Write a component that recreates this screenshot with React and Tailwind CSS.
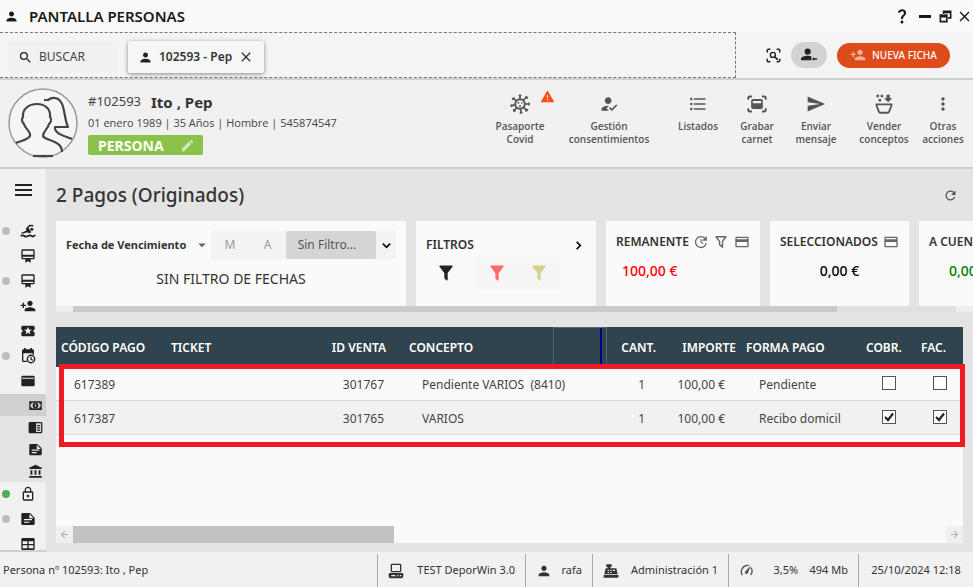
import {
  MdPerson,
  MdSearch,
  MdClose,
  MdPersonAdd,
  MdWarning,
  MdHowToReg,
  MdFormatListBulleted,
  MdSend,
  MdMoreVert,
  MdEdit,
  MdCardMembership,
  MdLocalActivity,
  MdAccountBalance,
  MdLockOutline,
  MdRefresh,
  MdCreditCard,
  MdArrowDropDown,
  MdQuestionMark,
  MdArrowBack,
  MdArrowForward,
} from "react-icons/md";

function Svg({ size = 16, className = "", children }) {
  return (
    <svg
      width={size}
      height={size}
      viewBox="0 0 24 24"
      fill="currentColor"
      className={className}
      aria-hidden="true"
    >
      {children}
    </svg>
  );
}

const Stroke = ({ width = 2, ...props }) => (
  <path fill="none" stroke="currentColor" strokeWidth={width} {...props} />
);

const ScanSearchIcon = ({ size }) => (
  <Svg size={size}>
    <Stroke width="2.4" d="M2 7V4q0-2 2-2h3M17 2h3q2 0 2 2v3M22 17v3q0 2-2 2h-3M7 22H4q-2 0-2-2v-3" />
    <circle cx="11" cy="11" r="4" fill="none" stroke="currentColor" strokeWidth="2.2" />
    <Stroke width="2.8" d="M14 14l5 5" />
  </Svg>
);

const PersonBackIcon = ({ size }) => (
  <Svg size={size}>
    <circle cx="10" cy="7" r="4.6" />
    <path d="M0 20v-2.500C0 14.500 6 13 10 13c2 0 4 .3 5.500 1v6z" />
    <path d="M16.500 18l3-2.500v1.500H24v2h-4.500v1.500z" />
  </Svg>
);

const RestoreIcon = ({ size }) => (
  <Svg size={size}>
    <path d="M7 1h16v15h-6v-3h3V6H10v3H7zM1 8h15v15H1zm3 6v6h9v-6z" fillRule="evenodd" />
  </Svg>
);

const VirusIcon = ({ size }) => (
  <Svg size={size}>
    <circle cx="12" cy="12" r="5.800" fill="none" stroke="currentColor" strokeWidth="2.400" />
    <Stroke
      width="2"
      d="M12 6V2M16 7.500l3.500-3.500M18 12h4M16.500 16l3 3.500M12.500 18l.8 4M8 16.500L5 20M6 13l-4 1M7.500 8L4 5.500"
    />
    <Stroke
      width="2.600"
      strokeLinecap="round"
      d="M11.500 1.800h1M19.500 3.500l1 1M22.500 11.500v1M20.500 19l-1 1M12.800 22.500h1M5.500 20.500l-1-1M1.800 14.500v-1M3.500 6l1-1"
    />
    <circle cx="10" cy="10.500" r="1.200" />
    <circle cx="14.300" cy="10.800" r="1" />
    <circle cx="12" cy="14.500" r="1.200" />
  </Svg>
);

const CardScanIcon = ({ size }) => (
  <Svg size={size}>
    <Stroke width="2.200" d="M1.500 7V5q0-2 2-2H6M18 3h2.500q2 0 2 2v2M22.500 17v2q0 2-2 2H18M6 21H3.500q-2 0-2-2v-2" />
    <path d="M7 6h10q2 0 2 2v8q0 2-2 2H7q-2 0-2-2V8q0-2 2-2zm0 2.500V11h10V8.500z" fillRule="evenodd" />
  </Svg>
);

const BasketIcon = ({ size }) => (
  <Svg size={size}>
    <path d="M3 1h3v3H3zM8 1h3v3H8zM5.500 6h3v3h-3zM15 1h4v4h3l-5 5-5-5h3z" />
    <Stroke width="2.200" d="M3 12.500h18v1.500l-3 7.500q-.4 1-1.500 1h-9q-1.100 0-1.500-1L3 14z" />
  </Svg>
);

const SwimIcon = ({ size, className }) => (
  <Svg size={size} className={className}>
    <path d="M8.500 8.500L14 2.500l6 .5v2.300l-5-.3-2.200 2.500 4.200 6.500q-2 2-4 .8t-5 0q-3 1.200-6 1.400v-1.500q4-1 8-3.700z" />
    <circle cx="17.800" cy="9.500" r="2.300" />
    <Stroke width="2.600" d="M1 19.500q3-2 5.500 0t5.500 0 5.500 0 5.500-1.500" />
  </Svg>
);

const CalendarClockIcon = ({ size, className }) => (
  <Svg size={size} className={className}>
    <path d="M6 0h2.500v2h7V0H18v2h1q2 0 2 2v6h-2V8H5v11h5l1 2H5q-2 0-2-2V4q0-2 2-2h1z" />
    <circle cx="16.500" cy="16.500" r="5.500" fill="none" stroke="currentColor" strokeWidth="2.200" />
    <Stroke width="1.800" d="M16.500 13v4l3 1.500" />
  </Svg>
);

const CardIcon = ({ size, className }) => (
  <Svg size={size} className={className}>
    <path d="M4 4h16q2 0 2 2v12q0 2-2 2H4q-2 0-2-2V6q0-2 2-2zm-1 3v1.500h18V7z" fillRule="evenodd" />
  </Svg>
);

const CashIcon = ({ size }) => (
  <Svg size={size}>
    <path d="M2 5h20v14H2zm4 2.500q0 2-2 2v5q2 0 2 2h12q0-2 2-2v-5q-2 0-2-2z" fillRule="evenodd" />
    <circle cx="12" cy="12" r="4.500" />
    <path d="M11 10h2v4h-2z" fill="#d0d0d0" />
  </Svg>
);

const ReaderIcon = ({ size }) => (
  <Svg size={size}>
    <path d="M3 3h18q2 0 2 2v14q0 2-2 2H3q-2 0-2-2V5q0-2 2-2zm10 2v14h8V5z" fillRule="evenodd" />
    <path d="M14.500 8h5v2h-5zM14.500 11.500h5v2h-5zM14.500 15h5v2h-5z" />
  </Svg>
);

const NoteIcon = ({ size, className }) => (
  <Svg size={size} className={className}>
    <path
      d="M4 3h11l7 7v9q0 2-2 2H4q-2 0-2-2V5q0-2 2-2zm10 1.500V11h6.500zM6 12v1.800h12V12zm0 4v1.800h8V16z"
      fillRule="evenodd"
    />
  </Svg>
);

const GridIcon = ({ size, className }) => (
  <Svg size={size} className={className}>
    <path
      d="M4 3h16q2 0 2 2v14q0 2-2 2H4q-2 0-2-2V5q0-2 2-2zm0 5v4h7V8zm9 0v4h7V8zm-9 6v4.500h7V14zm9 0v4.500h7V14z"
      fillRule="evenodd"
    />
  </Svg>
);

const FilterIcon = ({ size, className }) => (
  <Svg size={size} className={className}>
    <path d="M14,12V19.880C14.040,20.180 13.940,20.500 13.710,20.710C13.320,21.100 12.690,21.100 12.300,20.710L10.290,18.700C10.060,18.470 9.960,18.160 10,17.870V12H9.970L4.210,4.620C3.870,4.190 3.950,3.560 4.380,3.220C4.570,3.080 4.780,3 5,3V3H19V3C19.220,3 19.430,3.080 19.620,3.220C20.050,3.560 20.130,4.190 19.790,4.620L14.030,12H14Z" />
  </Svg>
);

const FilterOutlineIcon = ({ size }) => (
  <Svg size={size}>
    <Stroke width="2.400" d="M3.500 3h17L14.500 11v10l-5-4.500V11z" strokeLinejoin="round" />
  </Svg>
);

const UpdateIcon = ({ size }) => (
  <Svg size={size}>
    <Stroke width="2.200" d="M21 14a9.300 9.300 0 1 1-2.500-8.500" />
    <path d="M22 1.500V10h-8.500z" />
    <Stroke width="1.800" d="M12 7v5.500l4 2.300" />
  </Svg>
);

const GaugeIcon = ({ size, className }) => (
  <Svg size={size} className={className}>
    <Stroke width="2.200" d="M5.500 19.500a10 10 0 0 1 10-15.500M19 7.500a10 10 0 0 1-.5 12" />
    <path d="M19 4l-4.500 11.500a2.600 2.600 0 1 1-4.300-2.500z" />
  </Svg>
);

const ComputerIcon = ({ size }) => (
  <Svg size={size}>
    <path d="M6 1h12q2 0 2 2v9q0 2-2 2H6q-2 0-2-2V3q0-2 2-2zm0 2v9h12V3z" fillRule="evenodd" />
    <path d="M3 15h18q2 0 2 2v3q0 3-3 3H4q-3 0-3-3v-3q0-2 2-2zm2 3v2h6v-2zm9 0v2h2v-2zm4 0v2h2v-2z" fillRule="evenodd" />
  </Svg>
);

const RegisterIcon = ({ size }) => (
  <Svg size={size}>
    <path
      d="M5 2h8v4h-2v2h9l2 9H2L4 8h3V6H5zm2 8v2h2v-2zm4 0v2h2v-2zm4 0v2h3v-2zm-8 3.500v1.500h2v-1.500zm4 0v1.500h2v-1.500zM1 18h22v4H1z"
      fillRule="evenodd"
    />
  </Svg>
);

const Chevron = ({ size, d }) => (
  <Svg size={size}>
    <Stroke width="3.500" d={d} />
  </Svg>
);

function Avatar() {
  return (
    <svg width="70" height="70" viewBox="0 0 70 70" fill="none" className="shrink-0" aria-hidden="true">
      <circle cx="35" cy="35" r="34" fill="#f5f5f5" stroke="#999" strokeWidth="1.500" />
      <g stroke="#444" strokeWidth="2.200" strokeLinejoin="round">
        <path d="M8 55c4-2 12-3 14-7 1-5-5-7-6-12-2-2-3-5-1-7-1-8 6-13 14-13s14 5 13 13c2 2 1 5-1 7-1 5-6 7-6 12 2 5 19 4 19 16" />
        <path d="M36 12h4c4-3 10-3 13 2 4 6 3 16 7 25H47c-1 7 10 9 17 12" />
        <path d="M25 68h20" />
      </g>
    </svg>
  );
}

const actions = [
  { lines: ["Pasaporte", "Covid"], icon: VirusIcon, width: "w-[78px]", alert: true },
  { lines: ["Gestión", "consentimientos"], icon: MdHowToReg, width: "w-[100px]" },
  { lines: ["Listados"], icon: MdFormatListBulleted, width: "w-[78px]" },
  { lines: ["Grabar", "carnet"], icon: CardScanIcon, width: "w-10" },
  { lines: ["Enviar", "mensaje"], icon: MdSend, width: "w-[78px]" },
  { lines: ["Vender", "conceptos"], icon: BasketIcon, width: "w-[58px]" },
  { lines: ["Otras", "acciones"], icon: MdMoreVert, width: "w-[60px]" },
];

const menuTop = [
  { label: "Actividades", icon: SwimIcon, dot: "bg-[#bdbdbd]" },
  { label: "Abonos", icon: MdCardMembership },
  { label: "Cuotas", icon: MdCardMembership, dot: "bg-[#bdbdbd]" },
  { label: "Relaciones", icon: MdPersonAdd },
  { label: "Entradas", icon: MdLocalActivity },
  { label: "Reservas", icon: CalendarClockIcon, dot: "bg-[#bdbdbd]" },
  { label: "Economía", icon: CardIcon },
];

const menuSub = [
  { label: "Pagos", icon: CashIcon, active: true },
  { label: "Recibos", icon: ReaderIcon },
  { label: "Facturas", icon: NoteIcon },
  { label: "Bancos", icon: MdAccountBalance },
];

const menuBottom = [
  { label: "Accesos", icon: MdLockOutline, dot: "bg-[#4caf50]" },
  { label: "Documentos", icon: NoteIcon, dot: "bg-[#bdbdbd]" },
  { label: "Tablas", icon: GridIcon },
];

const payments = [
  { id: "617389", sale: "301767", concept: "Pendiente VARIOS  (8410)", qty: 1, amount: "100,00 €", method: "Pendiente", paid: false, invoiced: false },
  { id: "617387", sale: "301765", concept: "VARIOS", qty: 1, amount: "100,00 €", method: "Recibo domicil", paid: true, invoiced: true },
];

function TitleBar() {
  return (
    <header className="flex h-8 shrink-0 items-center bg-[#fafafa] pl-1 text-[#1a1a1a]">
      <MdPerson size={15} />
      <h1 className="ml-2.5 flex-1 text-[15px] font-semibold">PANTALLA PERSONAS</h1>
      <div className="flex items-center gap-1">
        <button aria-label="Ayuda"><MdQuestionMark size={18} /></button>
        <button aria-label="Minimizar" className="flex w-5 justify-center">
          <span className="h-[3px] w-3 bg-[#1a1a1a]" />
        </button>
        <button aria-label="Restaurar"><RestoreIcon size={13} /></button>
        <button aria-label="Cerrar"><MdClose size={17} /></button>
      </div>
    </header>
  );
}

function TabBar() {
  return (
    <div className="flex h-12 shrink-0 items-stretch border-b-2 border-[#cfcfcf] bg-[#f4f4f4]">
      <nav className="flex flex-1 items-center gap-2.5 border border-l-0 border-dashed border-[#777] pt-1 pl-2">
        <button className="flex h-8 w-[110px] items-center gap-1.5 bg-[#f1f1f1] pl-2.5 text-[12px] text-[#444]">
          <MdSearch size={15} className="text-[#222]" />
          BUSCAR
        </button>
        <div className="flex h-8 items-center rounded-xs bg-[#f6f6f6] pr-2.5 pl-2.5 text-[12px] font-semibold text-[#333] shadow-[0_1px_4px_rgba(0,0,0,0.45)]">
          <MdPerson size={15} className="mr-1.5 text-[#222]" />
          102593 - Pep
          <button aria-label="Cerrar ficha" className="ml-1.5"><MdClose size={16} /></button>
        </div>
      </nav>
      <div className="flex items-center gap-2.5 pr-[23px] pl-[30px] text-[#222]">
        <button aria-label="Buscar por imagen"><ScanSearchIcon size={15} /></button>
        <button aria-label="Persona anterior" className="flex h-[26px] w-9 items-center justify-center rounded-full bg-[#d3d3d3]">
          <PersonBackIcon size={16} />
        </button>
        <button className="flex h-[25px] w-[113px] items-center justify-center gap-1.5 rounded-full bg-[#de4c1c] text-[10px] font-medium text-white">
          <MdPersonAdd size={16} className="text-[#f3b09b]" />
          NUEVA FICHA
        </button>
      </div>
    </div>
  );
}

function PersonHeader() {
  return (
    <section className="flex h-[89px] shrink-0 border-b-2 border-[#cfcfcf] bg-[#f1f1f1] pl-2 text-[#444]">
      <div className="flex pt-2">
        <Avatar />
        <div className="ml-2.5">
          <div className="flex h-6 items-center pt-1">
            <span className="text-[13px]">#102593</span>
            <h2 className="ml-2.5 text-[15px] font-bold text-[#333]">Ito , Pep</h2>
          </div>
          <p className="h-[23px] font-['Open_Sans',sans-serif] text-[11px] leading-[22px] whitespace-nowrap">
            01 enero 1989 | 35 Años | Hombre | 545874547
          </p>
          <button className="flex h-5 w-[115px] items-center justify-between rounded-xs bg-[#8bc34a] px-2 pl-2.5 text-[14px] font-bold text-white">
            PERSONA
            <MdEdit size={15} className="text-[#d0e7b7]" />
          </button>
        </div>
      </div>
      <div className="ml-auto flex items-start pt-3.5 font-['Open_Sans',sans-serif]">
        {actions.map(({ lines, icon: Icon, width, alert }) => (
          <button
            key={lines[0]}
            className={`relative flex flex-col items-center text-[10px] leading-[13px] font-semibold text-[#555] ${width}`}
          >
            <Icon size={20} />
            {alert && <MdWarning size={15} className="absolute top-[-5px] right-1 text-[#ff4d12]" />}
            <span className="mt-1.5">{lines[0]}</span>
            <span>{lines[1]}</span>
          </button>
        ))}
      </div>
    </section>
  );
}

function MenuItem({ label, icon: Icon, dot }) {
  return (
    <button aria-label={label} className="flex h-[25px] w-full shrink-0 items-center pb-0.5">
      <span className={`ml-0.5 size-2 rounded-full ${dot || ""}`} />
      <Icon size={16} className="ml-2.5" />
    </button>
  );
}

function Sidebar() {
  return (
    <aside className="flex w-[46px] shrink-0 flex-col overflow-hidden border-b-2 border-[#cfcfcf] bg-[#f1f1f1] text-[#222]">
      <button aria-label="Menú" className="flex h-[50px] w-full shrink-0 flex-col items-center justify-center gap-[3px] pb-2">
        <span className="h-0.5 w-[17px] bg-[#222]" />
        <span className="h-0.5 w-[17px] bg-[#222]" />
        <span className="h-0.5 w-[17px] bg-[#222]" />
      </button>
      {menuTop.map((item) => (
        <MenuItem key={item.label} {...item} />
      ))}
      <div className="shrink-0 bg-[#e4e4e4]">
        {menuSub.map(({ label, icon: Icon, active }) => (
          <button
            key={label}
            aria-label={label}
            className={`flex h-[22px] w-full items-center justify-end pr-[3px] ${active ? "bg-[#d0d0d0]" : ""}`}
          >
            <Icon size={15} />
          </button>
        ))}
      </div>
      {menuBottom.map((item) => (
        <MenuItem key={item.label} {...item} />
      ))}
    </aside>
  );
}

function SummaryCards() {
  return (
    <div className="overflow-hidden">
      <div className="flex h-[85px] gap-2.5 text-[#333] *:shrink-0 *:bg-[#fafafa]">
        <div className="w-[350px] px-2.5 pt-2.5">
          <div className="flex h-7 items-center">
            <label className="flex flex-1 items-center">
              <select aria-label="Tipo de fecha" className="w-[127px] appearance-none text-[11px] font-bold">
                <option>Fecha de Vencimiento</option>
              </select>
              <MdArrowDropDown size={18} className="text-[#666]" />
            </label>
            <div className="flex h-7 bg-[#f3f3f3] text-[12px] text-[#999]">
              <button className="w-[38px]">M</button>
              <button className="w-[37px]">A</button>
              <button className="w-[90px] rounded-xs bg-[#d5d5d5] pr-2 text-[#555]">Sin Filtro...</button>
              <button aria-label="Más filtros" className="flex w-5 items-center justify-center text-black">
                <Chevron size={11} d="M4 8l8 8 8-8" />
              </button>
            </div>
          </div>
          <p className="mt-2.5 text-center text-[14px] leading-5">SIN FILTRO DE FECHAS</p>
        </div>

        <div className="w-[180px] px-2.5 pt-3">
          <div className="flex h-6 items-center justify-between text-[12px] font-semibold">
            FILTROS
            <button aria-label="Ver filtros" className="pr-0.5 text-black">
              <Chevron size={11} d="M8 4l8 8-8 8" />
            </button>
          </div>
          <div className="flex h-8 items-center">
            <button aria-label="Filtrar" className="flex w-10 justify-center"><FilterIcon size={20} className="text-[#222]" /></button>
            <div className="ml-2.5 flex h-8 w-[84px] items-center justify-around bg-[#f5f5f5]">
              <button aria-label="Filtro rojo"><FilterIcon size={20} className="text-[#ff6b6b]" /></button>
              <button aria-label="Filtro amarillo"><FilterIcon size={20} className="text-[#d6d48c]" /></button>
            </div>
          </div>
        </div>

        <div className="w-[154px] px-2.5 pt-3">
          <div className="flex h-[18px] items-center justify-between text-[12px] font-semibold">
            REMANENTE
            <span className="flex items-center gap-1.5 text-[#666]">
              <UpdateIcon size={14} />
              <FilterOutlineIcon size={14} />
              <MdCreditCard size={16} />
            </span>
          </div>
          <p className="mt-2 pl-1.5 text-[14px] leading-6 font-medium text-[#f00]">100,00 €</p>
        </div>

        <div className="w-[139px] px-2.5 pt-3">
          <div className="flex h-[18px] items-center justify-between text-[12px] font-semibold">
            SELECCIONADOS
            <MdCreditCard size={16} className="text-[#666]" />
          </div>
          <p className="mt-2 text-center text-[14px] leading-6 font-medium text-black">0,00 €</p>
        </div>

        <div className="w-[139px] px-2.5 pt-3 whitespace-nowrap">
          <div className="h-[18px] text-[12px] leading-[18px] font-semibold">A CUENTA</div>
          <p className="mt-2 pl-5 text-[14px] leading-6 font-medium text-[#008000]">0,00 €</p>
        </div>
      </div>
      <div className="flex h-1.5 bg-[#e0e0e0]">
        <span className="w-[17px] bg-[#eee]" />
        <span className="w-5/6 bg-[#cacaca]" />
        <span className="ml-auto w-[17px] bg-[#eee]" />
      </div>
    </div>
  );
}

function Check({ label, checked }) {
  return (
    <span className="grid place-items-center pb-1">
      <input
        type="checkbox"
        aria-label={label}
        defaultChecked={checked}
        className="peer col-start-1 row-start-1 size-3.5 appearance-none border border-[#555] bg-white"
      />
      <svg
        viewBox="0 0 12 12"
        className="pointer-events-none invisible col-start-1 row-start-1 size-3 peer-checked:visible"
        aria-hidden="true"
      >
        <path d="M2 6L5 9 10 2.500" fill="none" stroke="#222" strokeWidth="2.200" />
      </svg>
    </span>
  );
}

function PaymentsTable() {
  return (
    <div className="relative mt-[15px] mr-2.5 mb-[9px] flex min-h-0 flex-1 flex-col bg-[#fafafa]">
      <table className="w-full table-fixed border-separate border-spacing-0 text-[12px] text-[#444]">
        <colgroup>
          <col className="w-[110px]" />
          <col className="w-[144px]" />
          <col className="w-[94px]" />
          <col />
          <col className="w-[54px]" />
          <col className="w-[54px]" />
          <col className="w-20" />
          <col className="w-[120px]" />
          <col className="w-[55px]" />
          <col className="w-[47px]" />
        </colgroup>
        <thead>
          <tr className="h-10 bg-[#2f444e] text-left text-white *:px-[5px] *:pt-0.5 *:font-semibold *:whitespace-nowrap">
            <th>CÓDIGO PAGO</th>
            <th>TICKET</th>
            <th className="pr-[18px]! text-right">ID VENTA</th>
            <th>CONCEPTO</th>
            <th className="border border-b-0 border-[#4d6876] p-0!">
              <span className="mr-1 ml-auto block h-[39px] w-0.5 bg-[#00008b]" />
            </th>
            <th className="text-right">CANT.</th>
            <th className="text-right">IMPORTE</th>
            <th>FORMA PAGO</th>
            <th>COBR.</th>
            <th>FAC.</th>
          </tr>
        </thead>
        <tbody>
          {payments.map((row) => (
            <tr key={row.id} className="h-[34px] even:bg-[#f1f1f1] *:border-b *:border-[#d9d9d9] *:pt-0.5">
              <td className="pl-[18px]">{row.id}</td>
              <td></td>
              <td className="pr-5 text-right">{row.sale}</td>
              <td className="pl-[18px] whitespace-pre">{row.concept}</td>
              <td></td>
              <td className="pr-4 text-right">{row.qty}</td>
              <td className="pr-4 text-right">{row.amount}</td>
              <td className="pl-[18px] whitespace-nowrap">{row.method}</td>
              <td><Check label={`Cobrado ${row.id}`} checked={row.paid} /></td>
              <td><Check label={`Facturado ${row.id}`} checked={row.invoiced} /></td>
            </tr>
          ))}
        </tbody>
      </table>

      {/* Highlighted rows */}
      <div className="pointer-events-none absolute top-[37px] right-[-2px] left-[3px] h-[83px] border-5 border-[#ed1c24]" />

      <div className="mt-auto flex h-[17px] text-[#aaa]">
        <span className="flex w-[17px] items-center justify-center bg-[#f0f0f0]"><MdArrowBack size={11} /></span>
        <span className="w-[321px] bg-[#c2c2c2]" />
        <span className="ml-auto flex w-[17px] items-center justify-center bg-[#f0f0f0]"><MdArrowForward size={11} /></span>
      </div>
    </div>
  );
}

function StatusBar() {
  return (
    <footer className="flex h-[35px] shrink-0 bg-[#f1f1f1] pt-0.5 text-[11px] text-[#333] *:flex *:items-center">
      <div className="flex-1 pl-[3px]">Persona nº 102593: Ito , Pep</div>
      <div className="w-[148px] justify-between border-l border-[#aaa] px-2.5"><ComputerIcon size={16} />TEST DeporWin 3.0</div>
      <div className="w-[67px] justify-between border-l border-[#aaa] px-2.5"><MdPerson size={16} />rafa</div>
      <div className="w-[136px] justify-between border-l border-[#aaa] px-2.5"><RegisterIcon size={16} />Administración 1</div>
      <div className="w-[130px] justify-between border-l border-[#aaa] px-2.5">
        <GaugeIcon size={15} className="mr-2 text-[#555]" />
        <span>3,5%</span>
        <span>494 Mb</span>
      </div>
      <div className="w-[115px] justify-center border-l border-[#aaa]">25/10/2024 12:18</div>
    </footer>
  );
}

export default function App() {
  return (
    <div className="flex h-screen flex-col overflow-hidden bg-[#e4e4e4] font-['Noto_Sans',sans-serif]">
      <TitleBar />
      <TabBar />
      <PersonHeader />
      <div className="flex min-h-0 flex-1">
        <Sidebar />
        <main className="flex min-w-0 flex-1 flex-col pl-2.5">
          <div className="flex h-[52px] shrink-0 items-center justify-between pr-[15px]">
            <h2 className="text-[19px] font-medium text-[#333]">2 Pagos (Originados)</h2>
            <button aria-label="Actualizar" className="text-[#555]"><MdRefresh size={15} /></button>
          </div>
          <SummaryCards />
          <PaymentsTable />
        </main>
      </div>
      <StatusBar />
    </div>
  );
}
